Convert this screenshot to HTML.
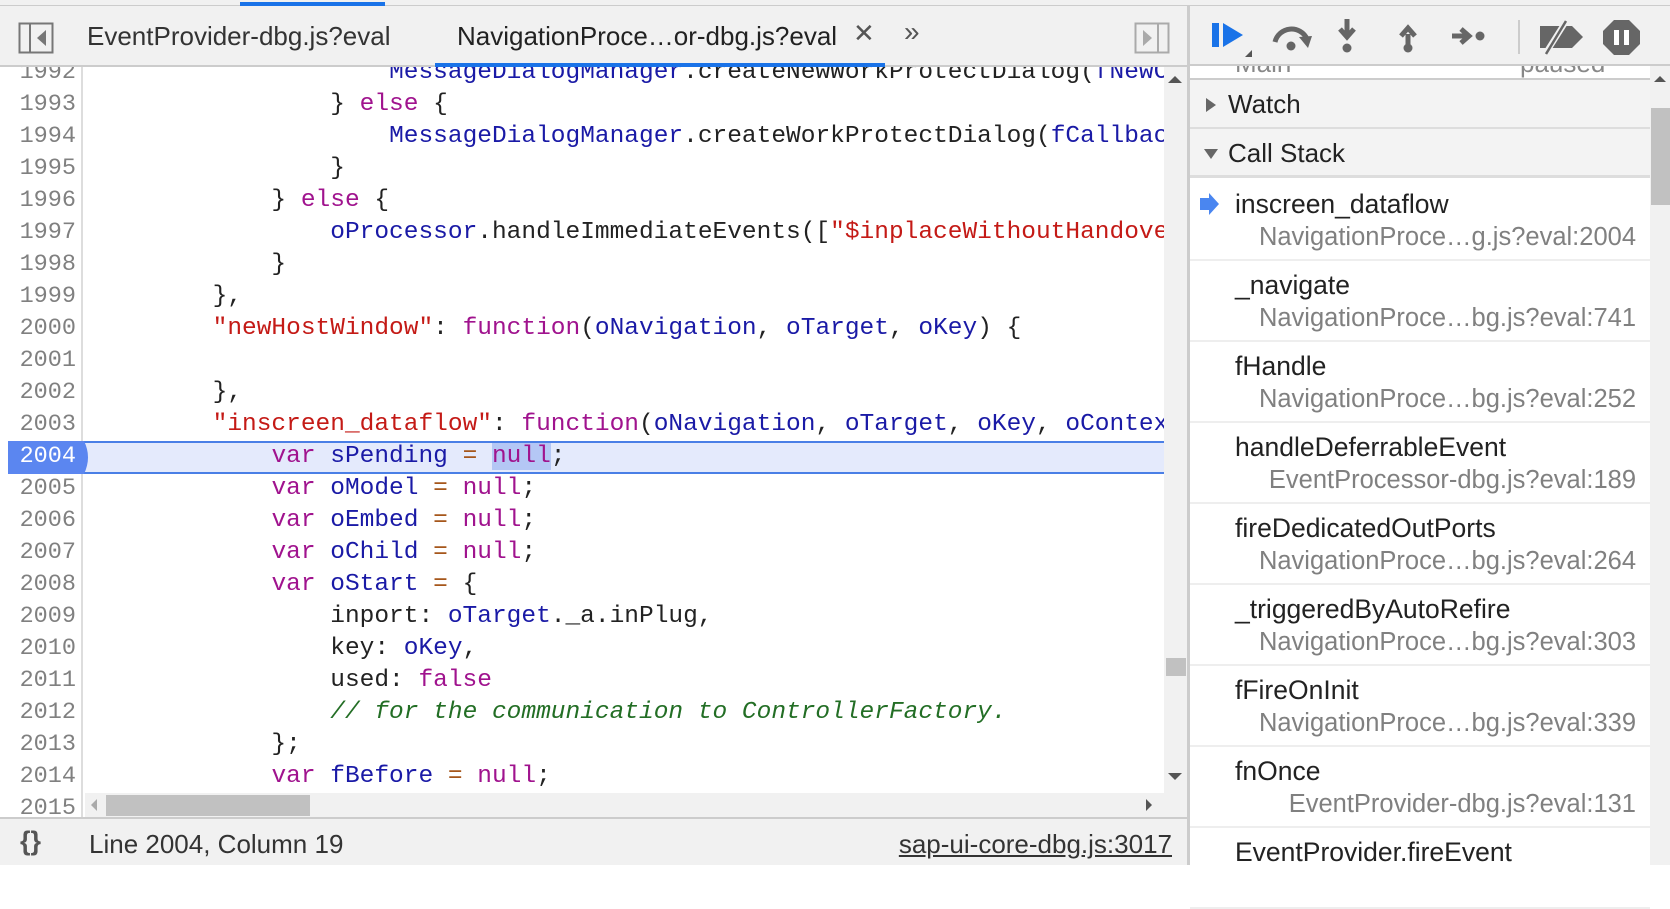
<!DOCTYPE html>
<html><head><meta charset="utf-8"><style>
*{margin:0;padding:0;box-sizing:border-box}
body{width:1670px;height:865px;overflow:hidden;background:#fff;position:relative;font-family:"Liberation Sans",sans-serif}
.a{position:absolute}
.code{font-family:"Liberation Mono",monospace;font-size:24.5px;white-space:pre;color:#222}
.ln{position:absolute;left:0;width:76px;text-align:right;font-family:"Liberation Mono",monospace;font-size:23.5px;color:#808080;line-height:32px}
.cl{position:absolute;left:95px;line-height:32px;height:32px}
.k{color:#a0138e}.v{color:#1a1aa6}.s{color:#c41a16}.o{color:#a5561b}.c{color:#236e25;font-style:italic}
.item{position:absolute;left:1190px;width:460px;height:81px;background:#fff;border-bottom:2px solid #eee}
.item .n{position:absolute;left:45px;top:9px;font-size:26.5px;color:#222;white-space:nowrap}
.item .f{position:absolute;right:14px;top:43px;font-size:25.5px;color:#808080;white-space:nowrap}
</style></head><body>
<div class="a" style="left:0;top:0;width:1670px;height:6px;background:#f1f1f1;border-bottom:1px solid #ccc"></div>
<div class="a" style="left:240px;top:2px;width:145px;height:4px;background:#1a73e8"></div>
<div class="a" style="left:0;top:6px;width:1188px;height:61px;background:#f1f1f1;border-bottom:2px solid #ccc"></div>
<svg class="a" style="left:18px;top:22px" width="38" height="32"><rect x="1.5" y="1.5" width="33" height="29" fill="none" stroke="#777" stroke-width="2"/><line x1="12" y1="2" x2="12" y2="30" stroke="#777" stroke-width="2"/><path d="M28 8 L28 24 L19 16Z" fill="#777"/></svg>
<div class="a" style="left:87px;top:21px;font-size:26px;color:#333;white-space:nowrap">EventProvider-dbg.js?eval</div>
<div class="a" style="left:457px;top:21px;font-size:26px;color:#222;white-space:nowrap">NavigationProce…or-dbg.js?eval</div>
<div class="a" style="left:853px;top:18px;font-size:26px;color:#555">✕</div>
<div class="a" style="left:904px;top:16px;font-size:28px;color:#555">»</div>
<div class="a" style="left:435px;top:63px;width:450px;height:4px;background:#1a73e8"></div>
<svg class="a" style="left:1134px;top:22px" width="36" height="32"><rect x="1.5" y="1.5" width="33" height="29" fill="none" stroke="#aaa" stroke-width="2"/><line x1="24" y1="2" x2="24" y2="30" stroke="#aaa" stroke-width="2"/><path d="M9 8 L9 24 L18 16Z" fill="#aaa"/></svg>
<div class="a" style="left:0;top:67px;width:1164px;height:751px;overflow:hidden">
 <div class="a" style="left:0;top:0;width:83px;height:751px;border-right:2px solid #ddd;background:#fff"></div>
 <div class="a" style="left:83px;top:374px;width:1081px;height:33px;background:#e4eafc;border-top:2px solid #4a7fe6;border-bottom:2px solid #4a7fe6"></div>
 <svg class="a" style="left:8px;top:374px" width="84" height="33"><path d="M0 0 H76 Q84 16 76 33 H0Z" fill="#5b86f0"/></svg>
 <div class="a code" style="left:0;top:-10px;width:1164px;height:780px">
  <div class="ln" style="top:0">1992</div><div class="ln" style="top:32px">1993</div><div class="ln" style="top:64px">1994</div><div class="ln" style="top:96px">1995</div><div class="ln" style="top:128px">1996</div><div class="ln" style="top:160px">1997</div><div class="ln" style="top:192px">1998</div><div class="ln" style="top:224px">1999</div><div class="ln" style="top:256px">2000</div><div class="ln" style="top:288px">2001</div><div class="ln" style="top:320px">2002</div><div class="ln" style="top:352px">2003</div><div class="ln" style="top:384px;color:#fff">2004</div><div class="ln" style="top:416px">2005</div><div class="ln" style="top:448px">2006</div><div class="ln" style="top:480px">2007</div><div class="ln" style="top:512px">2008</div><div class="ln" style="top:544px">2009</div><div class="ln" style="top:576px">2010</div><div class="ln" style="top:608px">2011</div><div class="ln" style="top:640px">2012</div><div class="ln" style="top:672px">2013</div><div class="ln" style="top:704px">2014</div><div class="ln" style="top:736px">2015</div>
  <div class="cl" style="top:0">                    <span class="v">MessageDialogManager</span>.createNewWorkProtectDialog(<span class="v">fNewCallback</span></div>
  <div class="cl" style="top:32px">                } <span class="k">else</span> {</div>
  <div class="cl" style="top:64px">                    <span class="v">MessageDialogManager</span>.createWorkProtectDialog(<span class="v">fCallback</span></div>
  <div class="cl" style="top:96px">                }</div>
  <div class="cl" style="top:128px">            } <span class="k">else</span> {</div>
  <div class="cl" style="top:160px">                <span class="v">oProcessor</span>.handleImmediateEvents([<span class="s">"$inplaceWithoutHandover"</span></div>
  <div class="cl" style="top:192px">            }</div>
  <div class="cl" style="top:224px">        },</div>
  <div class="cl" style="top:256px">        <span class="s">"newHostWindow"</span>: <span class="k">function</span>(<span class="v">oNavigation</span>, <span class="v">oTarget</span>, <span class="v">oKey</span>) {</div>
  <div class="cl" style="top:320px">        },</div>
  <div class="cl" style="top:352px">        <span class="s">"inscreen_dataflow"</span>: <span class="k">function</span>(<span class="v">oNavigation</span>, <span class="v">oTarget</span>, <span class="v">oKey</span>, <span class="v">oContext</span></div>
  <div class="cl" style="top:384px">            <span class="k">var</span> <span class="v">sPending</span> <span class="o">=</span> <span class="k" style="background:#b4c7f5">null</span>;</div>
  <div class="cl" style="top:416px">            <span class="k">var</span> <span class="v">oModel</span> <span class="o">=</span> <span class="k">null</span>;</div>
  <div class="cl" style="top:448px">            <span class="k">var</span> <span class="v">oEmbed</span> <span class="o">=</span> <span class="k">null</span>;</div>
  <div class="cl" style="top:480px">            <span class="k">var</span> <span class="v">oChild</span> <span class="o">=</span> <span class="k">null</span>;</div>
  <div class="cl" style="top:512px">            <span class="k">var</span> <span class="v">oStart</span> <span class="o">=</span> {</div>
  <div class="cl" style="top:544px">                inport: <span class="v">oTarget</span>._a.inPlug,</div>
  <div class="cl" style="top:576px">                key: <span class="v">oKey</span>,</div>
  <div class="cl" style="top:608px">                used: <span class="k">false</span></div>
  <div class="cl" style="top:640px">                <span class="c">// for the communication to ControllerFactory.</span></div>
  <div class="cl" style="top:672px">            };</div>
  <div class="cl" style="top:704px">            <span class="k">var</span> <span class="v">fBefore</span> <span class="o">=</span> <span class="k">null</span>;</div>
 </div>
</div>
<div class="a" style="left:1164px;top:67px;width:24px;height:751px;background:#f1f1f1"></div>
<div class="a" style="left:1168px;top:76px;width:0;height:0;border-left:7px solid transparent;border-right:7px solid transparent;border-bottom:7px solid #555"></div>
<div class="a" style="left:1166px;top:658px;width:20px;height:18px;background:#c1c1c1"></div>
<div class="a" style="left:1168px;top:773px;width:0;height:0;border-left:7px solid transparent;border-right:7px solid transparent;border-top:7px solid #555"></div>
<div class="a" style="left:85px;top:793px;width:1079px;height:25px;background:#f1f1f1"></div>
<div class="a" style="left:91px;top:799px;width:0;height:0;border-top:6px solid transparent;border-bottom:6px solid transparent;border-right:6px solid #aaa"></div>
<div class="a" style="left:106px;top:795px;width:204px;height:21px;background:#c1c1c1"></div>
<div class="a" style="left:1146px;top:799px;width:0;height:0;border-top:6px solid transparent;border-bottom:6px solid transparent;border-left:6px solid #555"></div>
<div class="a" style="left:0;top:817px;width:1188px;height:48px;background:#f1f1f1;border-top:2px solid #ccc"></div>
<div class="a" style="left:20px;top:826px;font-size:27px;color:#555;font-weight:bold">{}</div>
<div class="a" style="left:89px;top:829px;font-size:26px;color:#333;white-space:nowrap">Line 2004, Column 19</div>
<div class="a" style="left:780px;width:392px;text-align:right;top:829px;font-size:26px;color:#333;text-decoration:underline;white-space:nowrap">sap-ui-core-dbg.js:3017</div>
<div class="a" style="left:1187px;top:6px;width:3px;height:859px;background:#ccc"></div>
<div class="a" style="left:1190px;top:6px;width:480px;height:60px;background:#f1f1f1;border-bottom:2px solid #ccc"></div>
<svg class="a" style="left:1190px;top:6px" width="480" height="60">
 <rect x="22" y="17" width="7" height="24" fill="#1a73e8"/><path d="M33 17 L53 29 L33 41Z" fill="#1a73e8"/><path d="M62 51 L62 44 L55 51Z" fill="#555"/>
 <path d="M85 36 A17 17 0 0 1 117 33" fill="none" stroke="#666" stroke-width="5"/><path d="M109 31 L122 30 L118 42Z" fill="#666"/><circle cx="101" cy="40" r="4.5" fill="#666"/>
 <path d="M157 13 V28 M150 23 L157 31 L164 23" fill="none" stroke="#666" stroke-width="5"/><circle cx="157" cy="42" r="4.5" fill="#666"/>
 <path d="M218 44 V28 M211 30 L218 22 L225 30" fill="none" stroke="#666" stroke-width="5"/><circle cx="218" cy="42" r="4.5" fill="#666"/>
 <path d="M262 30 H276 M271 23 L279 30 L271 37" fill="none" stroke="#666" stroke-width="5"/><circle cx="290" cy="30" r="4.5" fill="#666"/>
 <line x1="329" y1="14" x2="329" y2="48" stroke="#ccc" stroke-width="2"/>
 <path d="M350 20 H382 L393 31 L382 42 H350Z" fill="#666"/><line x1="354" y1="50" x2="378" y2="12" stroke="#f1f1f1" stroke-width="6"/><line x1="356" y1="48" x2="376" y2="15" stroke="#666" stroke-width="2.5"/>
 <path d="M424 14 H439 L450 25 V38 L439 49 H424 L413 38 V25Z" fill="#666"/><rect x="424" y="24" width="5" height="15" fill="#fff"/><rect x="434" y="24" width="5" height="15" fill="#fff"/>
</svg>
<div class="a" style="left:1190px;top:66px;width:460px;height:14px;background:#fff;overflow:hidden;border-bottom:2px solid #ccc"><span class="a" style="left:45px;top:-18px;font-size:26px;color:#888">Main</span><span class="a" style="left:330px;top:-18px;font-size:26px;color:#888">paused</span></div>
<div class="a" style="left:1190px;top:80px;width:460px;height:49px;background:#f3f3f3;border-bottom:2px solid #ddd"></div>
<div class="a" style="left:1206px;top:98px;width:0;height:0;border-top:7px solid transparent;border-bottom:7px solid transparent;border-left:10px solid #666"></div>
<div class="a" style="left:1228px;top:89px;font-size:26px;color:#222">Watch</div>
<div class="a" style="left:1190px;top:129px;width:460px;height:49px;background:#f3f3f3;border-bottom:3px solid #ddd"></div>
<div class="a" style="left:1204px;top:149px;width:0;height:0;border-left:7px solid transparent;border-right:7px solid transparent;border-top:10px solid #666"></div>
<div class="a" style="left:1228px;top:138px;font-size:26px;color:#222">Call Stack</div>
<div class="item" style="top:180px"><svg class="a" style="left:10px;top:13px" width="20" height="22"><path d="M0 5 H9 V0 L19 11 L9 22 V17 H0Z" fill="#4a86f0"/></svg><div class="n">inscreen_dataflow</div><div class="f">NavigationProce…g.js?eval:2004</div></div>
<div class="item" style="top:261px"><div class="n">_navigate</div><div class="f">NavigationProce…bg.js?eval:741</div></div>
<div class="item" style="top:342px"><div class="n">fHandle</div><div class="f">NavigationProce…bg.js?eval:252</div></div>
<div class="item" style="top:423px"><div class="n">handleDeferrableEvent</div><div class="f">EventProcessor-dbg.js?eval:189</div></div>
<div class="item" style="top:504px"><div class="n">fireDedicatedOutPorts</div><div class="f">NavigationProce…bg.js?eval:264</div></div>
<div class="item" style="top:585px"><div class="n">_triggeredByAutoRefire</div><div class="f">NavigationProce…bg.js?eval:303</div></div>
<div class="item" style="top:666px"><div class="n">fFireOnInit</div><div class="f">NavigationProce…bg.js?eval:339</div></div>
<div class="item" style="top:747px"><div class="n">fnOnce</div><div class="f">EventProvider-dbg.js?eval:131</div></div>
<div class="item" style="top:828px"><div class="n">EventProvider.fireEvent</div></div>
<div class="a" style="left:1650px;top:66px;width:20px;height:799px;background:#f1f1f1"></div>
<div class="a" style="left:1654px;top:76px;width:0;height:0;border-left:6px solid transparent;border-right:6px solid transparent;border-bottom:6px solid #555"></div>
<div class="a" style="left:1651px;top:108px;width:19px;height:97px;background:#c1c1c1"></div>
</body></html>
